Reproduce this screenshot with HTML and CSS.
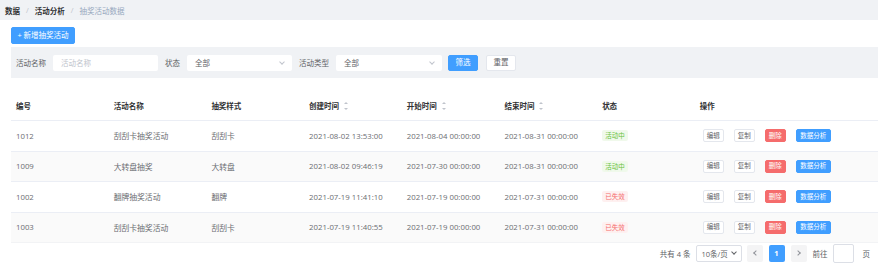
FILE: index.html
```html
<!DOCTYPE html>
<html lang="zh-CN">
<head>
<meta charset="utf-8">
<title>抽奖活动数据</title>
<link rel="stylesheet" href="styles.css">
</head>
<body>
<nav class="crumb">
  <span class="crumb-strong">数据</span><span class="sep">/</span><span class="crumb-strong">活动分析</span><span class="sep">/</span><span class="crumb-cur">抽奖活动数据</span>
</nav>
<main class="page">
  <div class="toolbar"><button class="btn btn-primary btn-add">+&nbsp;新增抽奖活动</button></div>
  <div class="filter">
    <label class="flabel">活动名称</label>
    <div class="field w-name"><span class="ph">活动名称</span></div>
    <label class="flabel">状态</label>
    <div class="field w-sel"><span>全部</span><span class="chev"></span></div>
    <label class="flabel">活动类型</label>
    <div class="field w-sel2"><span>全部</span><span class="chev"></span></div>
    <button class="btn btn-primary btn-f">筛选</button>
    <button class="btn btn-plain btn-f">重置</button>
  </div>
  <table class="grid">
    <colgroup>
      <col class="c"><col class="c"><col class="c"><col class="c"><col class="c"><col class="c"><col class="c"><col>
    </colgroup>
    <thead>
      <tr>
        <th>编号</th><th>活动名称</th><th>抽奖样式</th>
        <th>创建时间<span class="sort"></span></th>
        <th>开始时间<span class="sort"></span></th>
        <th>结束时间<span class="sort"></span></th>
        <th>状态</th><th>操作</th>
      </tr>
    </thead>
    <tbody>
      <tr>
        <td>1012</td><td>刮刮卡抽奖活动</td><td>刮刮卡</td><td>2021-08-02 13:53:00</td><td>2021-08-04 00:00:00</td><td>2021-08-31 00:00:00</td>
        <td><span class="tag tag-ok">活动中</span></td>
        <td><div class="ops"><button class="mb mb-plain">编辑</button><button class="mb mb-plain">复制</button><button class="mb mb-del">删除</button><button class="mb mb-blue">数据分析</button></div></td>
      </tr>
      <tr class="stripe">
        <td>1009</td><td>大转盘抽奖</td><td>大转盘</td><td>2021-08-02 09:46:19</td><td>2021-07-30 00:00:00</td><td>2021-08-31 00:00:00</td>
        <td><span class="tag tag-ok">活动中</span></td>
        <td><div class="ops"><button class="mb mb-plain">编辑</button><button class="mb mb-plain">复制</button><button class="mb mb-del">删除</button><button class="mb mb-blue">数据分析</button></div></td>
      </tr>
      <tr>
        <td>1002</td><td>翻牌抽奖活动</td><td>翻牌</td><td>2021-07-19 11:41:10</td><td>2021-07-19 00:00:00</td><td>2021-07-31 00:00:00</td>
        <td><span class="tag tag-off">已失效</span></td>
        <td><div class="ops"><button class="mb mb-plain">编辑</button><button class="mb mb-plain">复制</button><button class="mb mb-del">删除</button><button class="mb mb-blue">数据分析</button></div></td>
      </tr>
      <tr class="stripe">
        <td>1003</td><td>刮刮卡抽奖活动</td><td>刮刮卡</td><td>2021-07-19 11:40:55</td><td>2021-07-19 00:00:00</td><td>2021-07-31 00:00:00</td>
        <td><span class="tag tag-off">已失效</span></td>
        <td><div class="ops"><button class="mb mb-plain">编辑</button><button class="mb mb-plain">复制</button><button class="mb mb-del">删除</button><button class="mb mb-blue">数据分析</button></div></td>
      </tr>
    </tbody>
  </table>
  <div class="pager">
    <span class="total">共有 4 条</span>
    <div class="psize"><span>10条/页</span><span class="chev chev-dark"></span></div>
    <button class="pbtn"><span class="arr arr-l"></span></button>
    <button class="pbtn pbtn-on">1</button>
    <button class="pbtn"><span class="arr arr-r"></span></button>
    <span class="goto">前往</span>
    <div class="pinput"></div>
    <span class="page-unit">页</span>
  </div>
</main>
</body>
</html>
```
FILE: styles.css
```css
* { box-sizing: border-box; }
html, body { margin: 0; padding: 0; background: #fff; }
body {
  font-family: "Open Sans", "Noto Sans CJK SC", sans-serif;
  font-size: 7.5px;
  color: #606266;
  width: 878px;
  overflow: hidden;
}
button { font-family: inherit; font-size: inherit; cursor: pointer; margin: 0; }

.crumb {
  height: 20px;
  background: #f0f2f5;
  display: flex;
  align-items: center;
  padding-left: 5px;
  color: #97a8be;
}
.crumb-strong { color: #303133; font-weight: 700; }
.crumb-cur { color: #97a8be; }
.sep { color: #c0c4cc; margin: 0 6px; }

.page { padding-left: 11px; }
.toolbar { padding-top: 7px; }
.btn {
  border-radius: 2px;
  border: 1px solid transparent;
  padding: 0;
  line-height: 1;
  display: inline-flex;
  align-items: center;
  justify-content: center;
}
.btn-primary { background: #409eff; border-color: #409eff; color: #fff; }
.btn-plain { background: #fff; border-color: #e4e7ed; color: #606266; }
.btn-add { width: 64px; height: 17px; }

.filter {
  margin-top: 3px;
  height: 31px;
  background: #f0f2f5;
  display: flex;
  align-items: center;
  padding-left: 5px;
}
.flabel { color: #606266; margin-right: 7px; }
.field {
  height: 16px;
  background: #fff;
  border-radius: 2px;
  display: flex;
  align-items: center;
  justify-content: space-between;
  padding: 0 8px 0 8px;
  margin-right: 7px;
  color: #606266;
}
.w-name { width: 105px; }
.w-sel { width: 105px; }
.w-sel2 { width: 106px; margin-right: 6px; }
.ph { color: #c0c4cc; }
.chev {
  width: 4px; height: 4px;
  border-right: 1px solid #c0c4cc;
  border-bottom: 1px solid #c0c4cc;
  transform: rotate(45deg);
  margin-top: -2px;
}
.chev-dark { border-color: #606266; }
.btn-f { width: 30px; height: 16px; margin-right: 8px; }

.grid {
  margin-top: 12px;
  width: 867px;
  border-collapse: collapse;
  table-layout: fixed;
}
col.c { width: 97.7px; }
.grid th, .grid td {
  height: 30.5px;
  padding: 0 0 0 5px;
  text-align: left;
  border-bottom: 1px solid #ebeef5;
  white-space: nowrap;
  vertical-align: middle;
}
.grid th { color: #303133; font-weight: 700; }
.grid td { font-size: 7.8px; color: #6b6d72; }
.grid tbody tr:last-child td { border-bottom: 1px solid #f2f3f5; }
.stripe td { background: #fafafa; }

.sort {
  display: inline-block;
  position: relative;
  width: 5px;
  height: 8px;
  margin-left: 5px;
  vertical-align: middle;
  top: -1px;
}
.sort::before, .sort::after {
  content: "";
  position: absolute;
  left: 0;
  border-left: 2px solid transparent;
  border-right: 2px solid transparent;
}
.sort::before { top: 0; border-bottom: 2.5px solid #c0c4cc; }
.sort::after { bottom: 0; border-top: 2.5px solid #c0c4cc; }

.tag {
  display: inline-block;
  height: 11px;
  line-height: 11px;
  padding: 0 3px;
  border-radius: 2px;
  font-size: 6.5px;
}
.tag-ok { background: #f0f9eb; color: #67c23a; }
.tag-off { background: #fef0f0; color: #f56c6c; }

.ops { display: flex; gap: 10px; padding-left: 3px; }
.mb {
  height: 13px;
  padding: 0 3px;
  border-radius: 2px;
  border: 1px solid #e4e7ed;
  background: #fff;
  color: #606266;
  font-size: 6.5px;
  line-height: 1;
  display: inline-flex;
  align-items: center;
  justify-content: center;
}
.mb-plain { min-width: 21px; }
.mb-del { background: #f56c6c; border-color: #f56c6c; color: #fff; min-width: 21px; }
.mb-blue { background: #409eff; border-color: #409eff; color: #fff; min-width: 35px; }

.pager {
  display: flex;
  justify-content: flex-end;
  align-items: center;
  height: 20px;
  padding-right: 8px;
  color: #606266;
}
.total { margin-right: 5px; color: #606266; }
.psize {
  width: 46px; height: 17px;
  border: 1px solid #dcdfe6;
  border-radius: 2px;
  display: flex; align-items: center; justify-content: space-between;
  padding: 0 5px 0 5px;
  margin-right: 5px;
}
.pbtn {
  width: 16px; height: 17px;
  border: none; border-radius: 2px;
  background: #f4f4f5;
  color: #606266;
  padding: 0;
  display: inline-flex; align-items: center; justify-content: center;
  margin-right: 6px;
}
.pbtn-on { background: #409eff; color: #fff; font-weight: 700; }
.arr {
  width: 4px; height: 4px;
  border-left: 1px solid #909399;
  border-bottom: 1px solid #909399;
}
.arr-l { transform: rotate(45deg); margin-left: 2px; }
.arr-r { transform: rotate(-135deg); margin-right: 2px; }
.goto { margin-right: 5px; }
.pinput {
  width: 21px; height: 19px;
  border: 1px solid #dcdfe6;
  border-radius: 2px;
  margin-right: 9px;
}
```
